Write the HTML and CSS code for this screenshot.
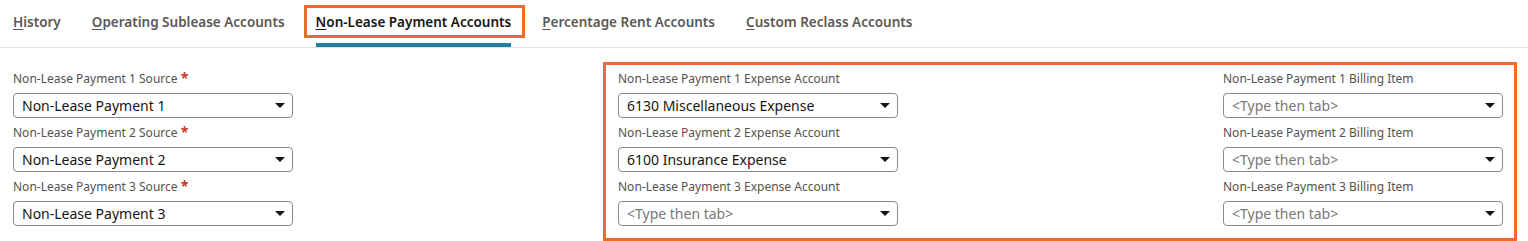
FILE: index.html
```html
<!doctype html>
<html lang="en">
<head>
  <meta charset="UTF-8">
  <meta name="viewport" content="width=device-width, initial-scale=1.0">
  <title>Non-Lease Payment Accounts</title>
  <link rel="stylesheet" href="styles.css">
</head>
<body>
  <nav class="tabs">
    <a class="tab"><u>H</u>istory</a>
    <a class="tab"><u>O</u>perating Sublease Accounts</a>
    <a class="tab active"><u>N</u>on-Lease Payment Accounts</a>
    <a class="tab"><u>P</u>ercentage Rent Accounts</a>
    <a class="tab"><u>C</u>ustom Reclass Accounts</a>
  </nav>

  <div class="form">
    <div class="col first">
      <div class="field">
        <label>Non-Lease Payment 1 Source <span class="req">*</span></label>
        <div class="select"><span class="value">Non-Lease Payment 1</span><span class="arrow"></span></div>
      </div>
      <div class="field">
        <label>Non-Lease Payment 2 Source <span class="req">*</span></label>
        <div class="select"><span class="value">Non-Lease Payment 2</span><span class="arrow"></span></div>
      </div>
      <div class="field">
        <label>Non-Lease Payment 3 Source <span class="req">*</span></label>
        <div class="select"><span class="value">Non-Lease Payment 3</span><span class="arrow"></span></div>
      </div>
    </div>

    <div class="highlight">
      <div class="col">
        <div class="field">
          <label>Non-Lease Payment 1 Expense Account</label>
          <div class="select"><span class="value">6130 Miscellaneous Expense</span><span class="arrow"></span></div>
        </div>
        <div class="field">
          <label>Non-Lease Payment 2 Expense Account</label>
          <div class="select"><span class="value">6100 Insurance Expense</span><span class="arrow"></span></div>
        </div>
        <div class="field">
          <label>Non-Lease Payment 3 Expense Account</label>
          <div class="select"><span class="value empty">&lt;Type then tab&gt;</span><span class="arrow"></span></div>
        </div>
      </div>
      <div class="col">
        <div class="field">
          <label>Non-Lease Payment 1 Billing Item</label>
          <div class="select"><span class="value empty">&lt;Type then tab&gt;</span><span class="arrow"></span></div>
        </div>
        <div class="field">
          <label>Non-Lease Payment 2 Billing Item</label>
          <div class="select"><span class="value empty">&lt;Type then tab&gt;</span><span class="arrow"></span></div>
        </div>
        <div class="field">
          <label>Non-Lease Payment 3 Billing Item</label>
          <div class="select"><span class="value empty">&lt;Type then tab&gt;</span><span class="arrow"></span></div>
        </div>
      </div>
    </div>
  </div>
</body>
</html>
```

FILE: styles.css
```css
body {
  margin: 0;
  font-family: "Noto Sans", "Open Sans", sans-serif;
  color: #161513;
  background: #fff;
}
.tabs {
  display: flex;
  gap: 31px;
  height: 47px;
  padding-left: 13px;
  border-bottom: 1px solid #e0e0e0;
}
.tab {
  position: relative;
  padding-top: 12px;
  height: 31px;
  line-height: 20px;
  font-size: 13.5px;
  font-weight: 600;
  color: #5b5855;
  cursor: pointer;
}
.tab u {
  text-underline-offset: 2px;
}
.tab.active {
  color: #161513;
  border-bottom: 4px solid #227e9e;
}
.tab.active::before {
  content: "";
  position: absolute;
  left: -12px;
  right: -14px;
  top: 5px;
  height: 27px;
  border: 3px solid #ef6a2b;
}
.form {
  display: flex;
  align-items: flex-start;
  padding: 14px 0 0 13px;
}
.col {
  width: 280px;
}
.col.first {
  margin-top: 9px;
}
.highlight {
  display: flex;
  gap: 325px;
  margin-left: 310px;
  padding: 6px 11px 12px 12px;
  border: 3px solid #ef6a2b;
}
.field {
  margin-bottom: 7px;
}
.field:last-child {
  margin-bottom: 0;
}
.field label {
  display: block;
  font-size: 12px;
  line-height: 16px;
  color: #55524f;
  margin-bottom: 6px;
}
.req {
  color: #c7382a;
  font-size: 14px;
  font-weight: 700;
  line-height: 10px;
}
.select {
  display: flex;
  align-items: center;
  justify-content: space-between;
  height: 23px;
  padding: 0 7px 0 8px;
  border: 1px solid #8d8a87;
  border-radius: 4px;
  font-size: 14px;
}
.value.empty {
  color: #7a7774;
}
.arrow {
  width: 0;
  height: 0;
  border-left: 5px solid transparent;
  border-right: 5px solid transparent;
  border-top: 5px solid #161513;
}
```
